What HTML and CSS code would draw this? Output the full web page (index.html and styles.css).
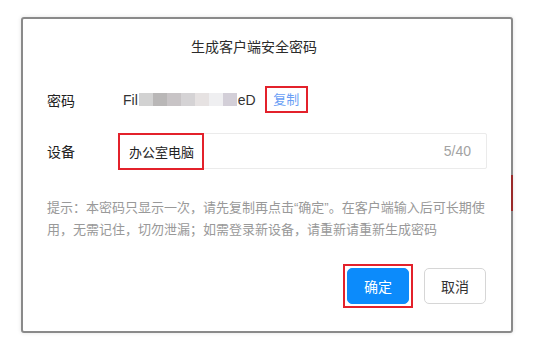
FILE: index.html
```html
<!DOCTYPE html>
<html lang="zh-CN">
<head>
<meta charset="utf-8">
<title>生成客户端安全密码</title>
<link rel="stylesheet" href="styles.css">
</head>
<body>
<div class="stage">
  <div class="frame">
    <span class="edge-mark"></span>
    <div class="dialog">
      <div class="title">生成客户端安全密码</div>
      <div class="row row-pass">
        <div class="label">密码</div>
        <div class="pass">
          <span class="pw-text">Fil</span><span class="blur"><i class="b1"></i><i class="b2"></i><i class="b3"></i><i class="b4"></i><i class="b5"></i><i class="b6"></i><i class="b7"></i></span><span class="pw-text">eD</span>
          <span class="copy">复制</span>
        </div>
      </div>
      <div class="row row-device">
        <div class="label">设备</div>
        <div class="input">
          <span class="input-value">办公室电脑</span>
          <span class="count">5/40</span>
          <span class="mark"></span>
        </div>
      </div>
      <p class="hint">提示：本密码只显示一次，请先复制再点击“确定”。在客户端输入后可长期使用，无需记住，切勿泄漏；如需登录新设备，请重新请重新生成密码</p>
      <div class="actions">
        <span class="mark-box"><button class="btn btn-primary">确定</button></span>
        <button class="btn btn-default">取消</button>
      </div>
    </div>
  </div>
</div>
</body>
</html>
```
FILE: styles.css
```css
* { box-sizing: border-box; }
html, body {
  margin: 0;
  padding: 0;
  background: #ffffff;
  font-family: "Liberation Sans", "Noto Sans CJK SC", sans-serif;
}
.stage {
  width: 557px;
  height: 343px;
  padding: 17px 0 0 21px;
}
.frame {
  position: relative;
  width: 492px;
  height: 316px;
  border: 2px solid #8a8a8a;
  border-radius: 3px;
  background: #ffffff;
  box-shadow: 0 0 4px rgba(0, 0, 0, 0.12);
}
.edge-mark {
  position: absolute;
  right: -2px;
  top: 156px;
  width: 2px;
  height: 36px;
  background: #9a2a2a;
}
.dialog {
  height: 100%;
  padding: 18px 24px 27px 24px;
  display: flex;
  flex-direction: column;
}
.title {
  font-size: 14px;
  line-height: 20px;
  color: #2b2b2b;
  text-align: center;
  padding-right: 26px;
}
.row {
  display: flex;
  align-items: center;
}
.row-pass {
  margin-top: 29px;
  height: 27px;
}
.row-device {
  margin-top: 20px;
  height: 36px;
}
.label {
  width: 71px;
  font-size: 14px;
  color: #222222;
}
.pass {
  display: flex;
  align-items: center;
  padding-left: 5px;
  font-size: 14px;
  color: #333333;
}
.pw-text { line-height: 20px; }
.blur {
  display: inline-flex;
  height: 13px;
  margin: 0 1px;
}
.blur i { display: block; width: 14px; height: 13px; }
.blur .b1 { background: #d2d2d2; }
.blur .b2 { background: #b9b7b7; }
.blur .b3 { background: #c8c4c6; }
.blur .b4 { background: #d5d3d5; }
.blur .b5 { background: #e6e2e2; }
.blur .b6 { background: #efeff1; }
.blur .b7 { background: #d3cfd8; }
.copy {
  margin-left: 9px;
  width: 43px;
  height: 27px;
  border: 2px solid #e3212b;
  font-size: 13px;
  line-height: 23px;
  text-align: center;
  color: #6a9ef5;
}
.input {
  position: relative;
  flex: 1;
  height: 36px;
  border: 1px solid #ebebeb;
  border-radius: 2px;
  display: flex;
  align-items: center;
  justify-content: space-between;
  padding: 0 15px 0 10px;
}
.input-value {
  font-size: 13px;
  color: #222222;
}
.count {
  font-size: 14px;
  color: #a3a3a3;
}
.mark {
  position: absolute;
  left: -1px;
  top: -1px;
  width: 86px;
  height: 37px;
  border: 2px solid #e3212b;
}
.hint {
  margin: 28px 0 0 0;
  font-size: 13px;
  line-height: 22px;
  color: #999999;
}
.actions {
  margin-top: 23px;
  display: flex;
  justify-content: flex-end;
  align-items: center;
  gap: 11px;
  padding-right: 1px;
}
.mark-box {
  display: flex;
  border: 2px solid #e3212b;
  padding: 2px;
}
.btn {
  width: 62px;
  height: 36px;
  border-radius: 5px;
  font-family: "Liberation Sans", "Noto Sans CJK SC", sans-serif;
  font-size: 14px;
  padding: 0;
  cursor: pointer;
}
.btn-primary {
  background: #0c8bfb;
  border: 1px solid #0c8bfb;
  color: #ffffff;
}
.btn-default {
  background: #ffffff;
  border: 1px solid #d6d6d6;
  color: #333333;
}
```
